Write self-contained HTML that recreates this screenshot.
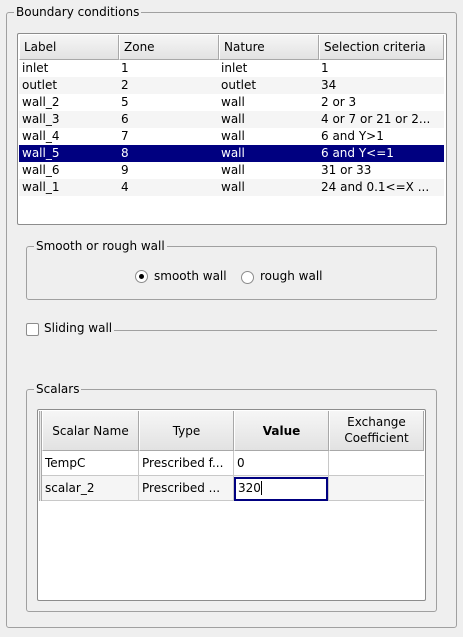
<!DOCTYPE html>
<html><head><style>
*{margin:0;padding:0;box-sizing:border-box}
body{width:463px;height:637px;background:#efefef;font-family:"DejaVu Sans","Liberation Sans",sans-serif;font-size:12px;color:#000;position:relative;overflow:hidden}
.a{position:absolute}
.gb{position:absolute;border:1px solid #a0a0a0;border-radius:3px}
.t{position:absolute;background:#efefef;padding:0 2px;line-height:14px;white-space:nowrap}
.tbl{position:absolute;background:#fff;border:1px solid #8c8c8c;border-radius:2px}
.hd{position:absolute;background:linear-gradient(#f6f6f6,#e2e2e2);border-right:1px solid #a8a8a8;border-left:1px solid #fff;border-bottom:1px solid #a8a8a8;line-height:24px;padding-left:4px;white-space:nowrap}
.row{position:absolute;height:17px;line-height:17px;white-space:nowrap}
.row span{position:absolute;top:0}
</style></head><body>
<div class="gb" style="left:6px;top:12px;width:451px;height:616px"></div>
<div class="t" style="left:14px;top:5px">Boundary conditions</div>

<div class="tbl" style="left:17px;top:33px;width:430px;height:192px"></div>
<div class="hd" style="left:19px;top:35px;width:100px;height:25px">Label</div>
<div class="hd" style="left:119px;top:35px;width:100px;height:25px">Zone</div>
<div class="hd" style="left:219px;top:35px;width:100px;height:25px">Nature</div>
<div class="hd" style="left:319px;top:35px;width:125px;height:25px">Selection criteria</div>

<div class="row" style="left:19px;top:60px;width:425px;background:#fff"><span style="left:3px">inlet</span><span style="left:102px">1</span><span style="left:202px">inlet</span><span style="left:302px">1</span></div>
<div class="row" style="left:19px;top:77px;width:425px;background:#f5f5f5"><span style="left:3px">outlet</span><span style="left:102px">2</span><span style="left:202px">outlet</span><span style="left:302px">34</span></div>
<div class="row" style="left:19px;top:94px;width:425px;background:#fff"><span style="left:3px">wall_2</span><span style="left:102px">5</span><span style="left:202px">wall</span><span style="left:302px">2 or 3</span></div>
<div class="row" style="left:19px;top:111px;width:425px;background:#f5f5f5"><span style="left:3px">wall_3</span><span style="left:102px">6</span><span style="left:202px">wall</span><span style="left:302px">4 or 7 or 21 or 2...</span></div>
<div class="row" style="left:19px;top:128px;width:425px;background:#fff"><span style="left:3px">wall_4</span><span style="left:102px">7</span><span style="left:202px">wall</span><span style="left:302px">6 and Y&gt;1</span></div>
<div class="row" style="left:19px;top:145px;width:425px;background:#000080;color:#fff"><span style="left:3px">wall_5</span><span style="left:102px">8</span><span style="left:202px">wall</span><span style="left:302px">6 and Y&lt;=1</span></div>
<div class="row" style="left:19px;top:162px;width:425px;background:#fff"><span style="left:3px">wall_6</span><span style="left:102px">9</span><span style="left:202px">wall</span><span style="left:302px">31 or 33</span></div>
<div class="row" style="left:19px;top:179px;width:425px;background:#f5f5f5"><span style="left:3px">wall_1</span><span style="left:102px">4</span><span style="left:202px">wall</span><span style="left:302px">24 and 0.1&lt;=X ...</span></div>

<div class="gb" style="left:26px;top:246px;width:411px;height:54px"></div>
<div class="t" style="left:34px;top:239px">Smooth or rough wall</div>
<div class="a" style="left:135px;top:270px;width:13px;height:13px;border:1px solid #8c8c8c;border-radius:50%;background:#fff"></div>
<div class="a" style="left:139px;top:274px;width:5px;height:5px;border-radius:50%;background:#000"></div>
<div class="a" style="left:154px;top:269px;line-height:14px">smooth wall</div>
<div class="a" style="left:241px;top:271px;width:13px;height:13px;border:1px solid #8c8c8c;border-radius:50%;background:#fff"></div>
<div class="a" style="left:260px;top:269px;line-height:14px">rough wall</div>

<div class="a" style="left:26px;top:323px;width:13px;height:13px;border:1px solid #8c8c8c;border-radius:2px;background:#fff"></div>
<div class="a" style="left:44px;top:321px;line-height:14px">Sliding wall</div>
<div class="a" style="left:114px;top:330px;width:323px;height:1px;background:#a0a0a0"></div>

<div class="gb" style="left:26px;top:389px;width:411px;height:223px"></div>
<div class="t" style="left:34px;top:382px">Scalars</div>

<div class="tbl" style="left:37px;top:409px;width:389px;height:192px"></div>
<div class="a" style="left:39px;top:411px;width:3px;height:90px;border-left:1px solid #a8a8a8;border-right:1px solid #a8a8a8;background:#e8e8e8"></div>
<div class="hd" style="left:42px;top:411px;width:97px;height:40px;line-height:40px;text-align:center;padding:0">Scalar Name</div>
<div class="hd" style="left:139px;top:411px;width:95px;height:40px;line-height:40px;text-align:center;padding:0">Type</div>
<div class="hd" style="left:234px;top:411px;width:95px;height:40px;line-height:40px;text-align:center;padding:0;font-weight:bold">Value</div>
<div class="hd" style="left:329px;top:411px;width:95px;height:40px;line-height:16px;padding:3px 0 0;text-align:center">Exchange<br>Coefficient</div>

<div class="a" style="left:42px;top:451px;width:382px;height:25px;background:#fff;border-bottom:1px solid #c8c8c8"></div>
<div class="a" style="left:42px;top:476px;width:382px;height:25px;background:#f5f5f5;border-bottom:1px solid #c8c8c8"></div>
<div class="a" style="left:138px;top:451px;width:1px;height:50px;background:#c8c8c8"></div>
<div class="a" style="left:233px;top:451px;width:1px;height:50px;background:#c8c8c8"></div>
<div class="a" style="left:328px;top:451px;width:1px;height:50px;background:#c8c8c8"></div>
<div class="a" style="left:45px;top:456px;line-height:15px">TempC</div>
<div class="a" style="left:142px;top:456px;line-height:15px">Prescribed f...</div>
<div class="a" style="left:237px;top:456px;line-height:15px">0</div>
<div class="a" style="left:45px;top:481px;line-height:15px">scalar_2</div>
<div class="a" style="left:142px;top:481px;line-height:15px">Prescribed ...</div>
<div class="a" style="left:234px;top:477px;width:94px;height:24px;border:2px solid #000080;background:#fff"></div>
<div class="a" style="left:238px;top:481px;line-height:15px">320<span style="border-right:1px solid #000"></span></div>
</body></html>
